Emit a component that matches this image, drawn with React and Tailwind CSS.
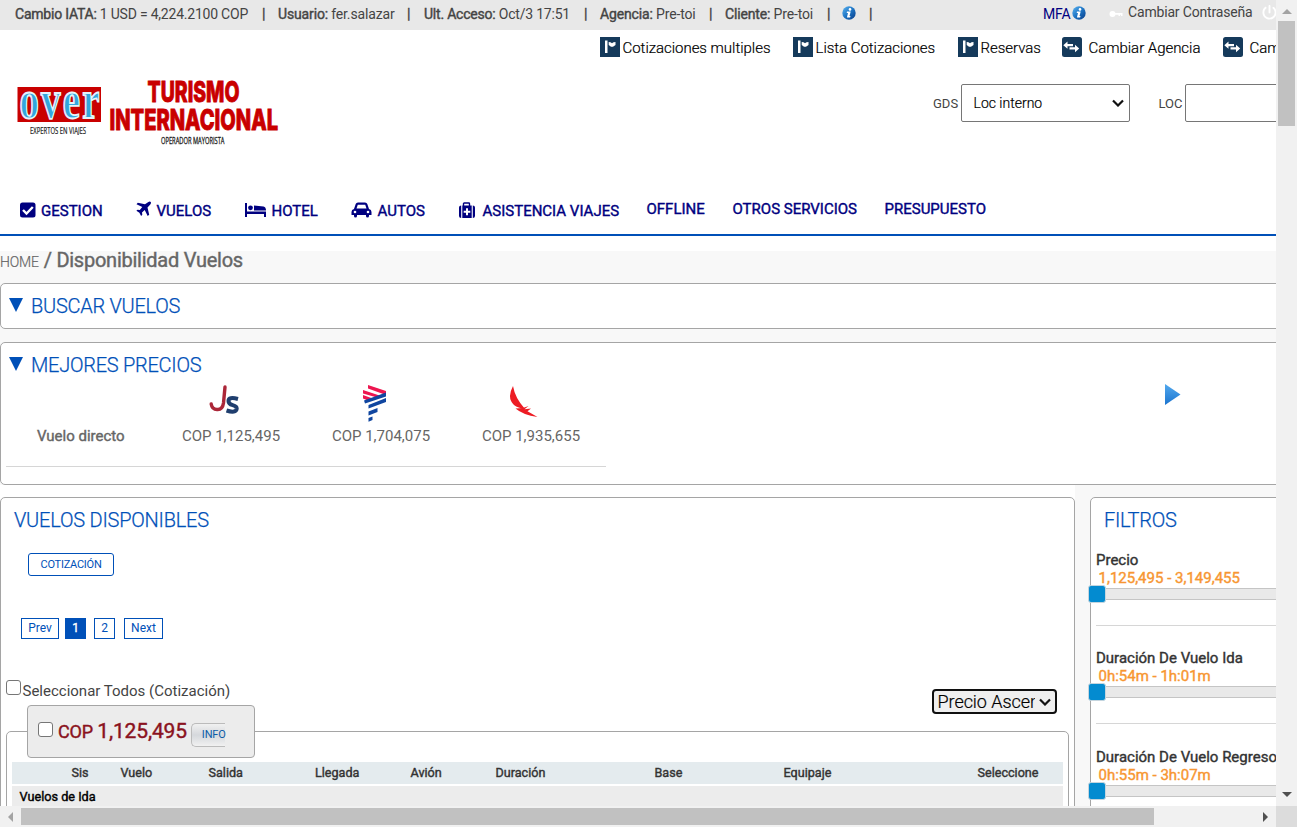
import React from "react";
import { FaPowerOff } from "react-icons/fa6";

const Cell = ({ w, className = "", children }) => (
  <div className={"shrink-0 whitespace-nowrap " + className} style={{ width: w }}>{children}</div>
);

const InfoIcon = () => (
  <svg width="14" height="14" viewBox="0 0 14 14">
    <defs>
      <linearGradient id="info" x1="0" y1="0" x2="1" y2="1">
        <stop offset="0" stopColor="#5cb4f0" />
        <stop offset="0.5" stopColor="#1d74c4" />
        <stop offset="1" stopColor="#0a3c86" />
      </linearGradient>
    </defs>
    <circle cx="7" cy="7" r="6.7" fill="url(#info)" />
    <circle cx="8" cy="3.4" r="1.300" fill="#fff" />
    <path d="M5 5.500h3.700L7.500 10h1l-.4 1.500H4.900L6 7H4.700z" fill="#fff" />
  </svg>
);

const FlagIcon = () => (
  <svg width="20" height="20" viewBox="0 0 20 20" className="shrink-0">
    <rect width="20" height="20" fill="#153a5b" />
    <path d="M5 3.500h2.500V16H5z" fill="#fff" />
    <path d="M8.700 5l1.800.200 1.500 1L13.500 5.200 15.500 5v3L13 9.700h-2L8.700 8z" fill="#fff" />
  </svg>
);

const SwapIcon = () => (
  <svg width="20" height="20" viewBox="0 0 20 20" className="shrink-0">
    <rect width="20" height="20" rx="2.500" fill="#153a5b" />
    <path d="M1.300 8.200L5.500 4.500V7H11v2.300H5.500v2.500zM17.200 11.500L13 7.800v2.500H7.500v2.300H13v2.600z" fill="#fff" />
  </svg>
);

const CheckSquare = () => (
  <svg width="16" height="16" viewBox="0 0 16 16">
    <rect x="0" y=".5" width="15.500" height="15" rx="2.500" fill="#000080" />
    <path d="M3 8l3.500 3.500L12.800 5" fill="none" stroke="#fff" strokeWidth="2.400" />
  </svg>
);

const Plane = () => (
  <svg width="16" height="16" viewBox="0 0 16 16">
    <path d="M14.800.9q.700.900-.5 2.500l-2.800 3 1.700 7.300-1.500 1.300-3-6-2.700 2.500.3 2.300-1.200 1.100-1.700-3.200L.4 9.800l1.100-1.100 2.300.2L6.300 6.100.500 3.200l1.300-1.500 7.200 1.500L12 1.200Q13.800 0 14.800.9z" fill="#000080" />
  </svg>
);

const Bed = () => (
  <svg width="21" height="14" viewBox="0 0 21 14">
    <path d="M0 0h2v8.500h19V14h-2v-3H2v3H0z" fill="#000080" />
    <circle cx="5.500" cy="4.800" r="2.400" fill="#000080" />
    <path d="M9 2.500l9.500 1q2.500.5 2.500 4H9z" fill="#000080" />
  </svg>
);

const Car = () => (
  <svg width="21" height="16" viewBox="0 0 21 16">
    <path d="M3 7l1.700-5Q5.200.5 7 .5h7q1.800 0 2.300 1.500L18 7q2.500.5 2.500 3v3H18v1q0 1.500-1.500 1.500T15 14v-1H6v1q0 1.500-1.500 1.500T3 14v-1H.5v-3Q.500 7.500 3 7z" fill="#000080" />
    <path d="M5.500 6.500l1.300-3.700h7.400l1.300 3.700z" fill="#fff" />
    <circle cx="4" cy="10" r="1.300" fill="#fff" />
    <circle cx="17" cy="10" r="1.300" fill="#fff" />
  </svg>
);

const Kit = () => (
  <svg width="17" height="16" viewBox="0 0 17 16" className="shrink-0">
    <path d="M5.500 4V1.700q0-.7.700-.7h4.600q.7 0 .7.700V4" fill="none" stroke="#000080" strokeWidth="1.400" />
    <path d="M4.300 3.500h9.400V16H4.300zM3.200 3.500Q1 3.500 1 5.500V14q0 2 2.200 2zM14.800 3.500q2.200 0 2.200 2V14q0 2-2.200 2z" fill="#000080" />
    <path d="M8 6.300h2v2.500h2.300v2H10v2.500H8v-2.500H5.700v-2H8z" fill="#fff" />
  </svg>
);

const Chevron = () => (
  <svg width="12" height="8" viewBox="0 0 12 8" className="shrink-0">
    <path d="M1 1.500l5 5 5-5" fill="none" stroke="#111" strokeWidth="2.200" />
  </svg>
);

const Check = ({ className = "" }) => (
  <span className={"block size-[15px] shrink-0 rounded-[3px] border border-[#767676] bg-white " + className} />
);

const B = ({ children }) => <b className="font-normal [-webkit-text-stroke:0.4px_currentColor]">{children}</b>;

function TopBar() {
  return (
    <div className="flex h-[30px] items-center bg-[#e8e8e8] pb-[2px] pl-[15px] text-[14px] tracking-[-0.15px] text-[#444]">
      <Cell w={247} className="tracking-[-0.22px]"><B>Cambio IATA:</B> 1 USD = 4,224.2100 COP</Cell>
      <Cell w={16}><B>|</B></Cell>
      <Cell w={129}><B>Usuario:</B> fer.salazar</Cell>
      <Cell w={17}><B>|</B></Cell>
      <Cell w={160} className="tracking-[-0.21px]"><B>Ult. Acceso:</B> Oct/3 17:51</Cell>
      <Cell w={16}><B>|</B></Cell>
      <Cell w={109}><B>Agencia:</B> Pre-toi</Cell>
      <Cell w={16}><B>|</B></Cell>
      <Cell w={102}><B>Cliente:</B> Pre-toi</Cell>
      <Cell w={15}><B>|</B></Cell>
      <Cell w={27} className="pb-[2px]"><InfoIcon /></Cell>
      <Cell w={174}><B>|</B></Cell>
      <Cell w={29} className="text-[#000080]">MFA</Cell>
      <Cell w={37} className="pb-[2px]"><InfoIcon /></Cell>
      <Cell w={19} className="text-white">
        <svg width="14" height="8" viewBox="0 0 14 8"><circle cx="3.500" cy="4" r="3" fill="#fff" /><path d="M5 3h8.500v3H12V4.800h-1V6H9.500V4.800H5z" fill="#fff" /></svg>
      </Cell>
      <Cell w={134} className="pb-[3px] tracking-[-0.17px]">Cambiar Contraseña</Cell>
      <Cell w={16} className="pb-[3px] text-white"><FaPowerOff size={15} /></Cell>
    </div>
  );
}

function QuickLinks() {
  const items = [
    [FlagIcon, "Cotizaciones multiples", 193, "ml-[2.500px]"],
    [FlagIcon, "Lista Cotizaciones", 165, "ml-[2.500px]"],
    [FlagIcon, "Reservas", 104, "ml-[2.500px]"],
    [SwapIcon, "Cambiar Agencia", 161, "ml-[6.500px]"],
    [SwapIcon, "Cambiar Cliente", 160, "ml-[6.500px]"],
  ];
  return (
    <div className="flex h-[34px] items-center pl-[600px] text-[15px] font-light tracking-[-0.03px] text-black [-webkit-text-stroke:0.2px_currentColor]">
      {items.map(([Icon, label, w, gap]) => (
        <Cell key={label} w={w} className="flex items-center"><Icon /><span className={"pt-[2px] " + gap}>{label}</span></Cell>
      ))}
    </div>
  );
}

function Header() {
  return (
    <div className="flex h-[116px] items-start">
      <svg width="290" height="90" viewBox="0 0 290 90" className="mt-[6px] shrink-0">
        <rect x="17.500" y="17" width="83.500" height="35" fill="#c90000" />
        <text transform="translate(19.500 47.600) scale(1 1.430)" textLength="80" fontFamily="Liberation Serif, serif" fontWeight="700" fontSize="39" fill="#32a6dc" stroke="#e4f4fb" strokeWidth="1.300">over</text>
        <text x="30" y="63.500" textLength="56" lengthAdjust="spacingAndGlyphs" fontFamily="Open Sans, sans-serif" fontSize="8.500" fill="#222" stroke="#222" strokeWidth=".2">EXPERTOS EN VIAJES</text>
        <text x="147.500" y="32" textLength="92" lengthAdjust="spacingAndGlyphs" fontFamily="Inter, sans-serif" fontWeight="800" fontSize="28.500" fill="#c90000" stroke="#c90000" strokeWidth=".9">TURISMO</text>
        <text x="109.500" y="59.700" textLength="168.500" lengthAdjust="spacingAndGlyphs" fontFamily="Inter, sans-serif" fontWeight="800" fontSize="28.500" fill="#c90000" stroke="#c90000" strokeWidth=".9">INTERNACIONAL</text>
        <text x="161" y="73.500" textLength="63.500" lengthAdjust="spacingAndGlyphs" fontFamily="Open Sans, sans-serif" fontSize="8.500" fill="#222" stroke="#222" strokeWidth=".3">OPERADOR MAYORISTA</text>
      </svg>
      <div className="ml-[643px] mt-[20px] flex h-[38px] items-center text-[13px] text-[#444]">
        <Cell w={28} className="pt-px">GDS</Cell>
        <div className="flex h-[38px] w-[169px] items-center justify-between rounded-[2px] border border-[#767676] pl-[11.500px] pr-[5px] text-[14px] font-light text-black [-webkit-text-stroke:0.2px_currentColor]">Loc interno<Chevron /></div>
        <Cell w={27} className="ml-[28.500px] -mr-[0.500px] pt-px">LOC</Cell>
        <div className="h-[38px] w-[160px] shrink-0 rounded-[2px] border border-[#767676]" />
      </div>
    </div>
  );
}

function Nav() {
  const items = [
    [<CheckSquare />, "GESTION", 116, 21, "pb-[3px]"],
    [<Plane />, "VUELOS", 109, 20.5, "pb-[4px]"],
    [<Bed />, "HOTEL", 106, 26.5, "pb-[2px]"],
    [<Car />, "AUTOS", 107, 26.5, "pb-[2px]"],
    [<Kit />, "ASISTENCIA VIAJES", 188.5, 24.5, "pb-[3px]"],
  ];
  return (
    <div className="flex h-[56px] items-center border-b-2 border-[#0050b8] pl-[20px] text-[15px] text-[#000080]">
      {items.map(([icon, label, w, iw, pad]) => (
        <Cell key={label} w={w} className="flex h-full items-center pt-[8px]">
          <span className={"shrink-0 " + pad} style={{ width: iw }}>{icon}</span><B>{label}</B>
        </Cell>
      ))}
      <Cell w={86} className="pt-[4px]"><B>OFFLINE</B></Cell>
      <Cell w={152} className="pt-[4px]"><B>OTROS SERVICIOS</B></Cell>
      <Cell w={120} className="pt-[4px]"><B>PRESUPUESTO</B></Cell>
    </div>
  );
}

const Title = ({ children }) => (
  <div className="flex h-[44px] items-center pl-[8px] text-[20px] font-light tracking-[-0.26px] text-[#0050b8] [-webkit-text-stroke:0.25px_currentColor]">
    <svg width="14" height="14" viewBox="0 0 14 14" className="mb-[2px] mr-[8px]"><path d="M0 0h14L7 14z" fill="#0050b8" /></svg>
    <span>{children}</span>
  </div>
);

const JsLogo = () => (
  <svg width="32" height="38" viewBox="0 0 32 38">
    <path d="M18 4L16.500 20q-1 7-6.500 6.500Q5 26.500 4.200 21" fill="none" stroke="#ab2638" strokeWidth="3.400" strokeLinecap="round" />
    <path d="M31 16Q21.500 13.500 21.500 18q0 3 4.200 4.200t4 3.500Q29 30.500 19.500 27.500" fill="none" stroke="#1f3e6e" strokeWidth="4" />
  </svg>
);
const LatamLogo = () => (
  <svg width="32" height="40" viewBox="0 0 32 40">
    <path d="M11 2l18 6v4L11 5.500zM6 7l18 6-4 1.500L6 10.500zM6 12l11 4-5 2-6-2.500z" fill="#ed1650" />
    <path d="M7 17.500l22-8v4L8 20.500zM11.500 22l17.500-7v4l-17.500 6.500zM11.500 28.500l9-3.500v4l-9 3.500zM11.500 35l4-1.500V37l-4 1.800z" fill="#1046a0" />
  </svg>
);
const AviancaLogo = () => (
  <svg width="36" height="38" viewBox="0 0 36 38">
    <path d="M6 3Q-.5 15 7 22q4 3 11 4Q8 15 6 3z" fill="#ed1c24" />
    <path d="M8.500 25.500q8 0 13-2.500l-4 3.200 6.500-.7-3.500 2.700 10 5.800Q16 32 8.500 25.500z" fill="#ed1c24" />
  </svg>
);

function BestPrices() {
  const prices = [[<JsLogo />, "COP 1,125,495"], [<LatamLogo />, "COP 1,704,075"], [<AviancaLogo />, "COP 1,935,655"]];
  return (
    <section className="h-[143px] w-[1300px] rounded-[5px] border border-[#a5a5a5] bg-white">
      <Title>MEJORES PRECIOS</Title>
      <div className="-mt-[4px] flex items-start">
        <div className="ml-[5px] flex h-[84px] w-[600px] shrink-0 border-b border-[#d6d6d6] text-[15px] text-[#666]">
          <Cell w={150} className="pl-[31px] pt-[42px]"><B>Vuelo directo</B></Cell>
          {prices.map(([logo, price]) => (
            <Cell key={price} w={150} className="text-center">
              <div className="ml-[51px] h-[42px]">{logo}</div>
              <div>{price}</div>
            </Cell>
          ))}
        </div>
        <svg width="17" height="22" viewBox="0 0 17 22" className="ml-[558px] mt-px shrink-0">
          <defs><linearGradient id="next" x1="0" y1="0" x2="0" y2="1"><stop offset="0" stopColor="#52a9ee" /><stop offset="1" stopColor="#1c74cf" /></linearGradient></defs>
          <path d="M1 0l15.500 10.500L1 21z" fill="url(#next)" />
        </svg>
      </div>
    </section>
  );
}

function Flights() {
  const page = "flex h-[21px] items-center justify-center border border-[#0050b8] pb-px text-[12px] ";
  return (
    <section className="h-[400px] w-[1075px] shrink-0 rounded-[5px] border border-[#a5a5a5] bg-white px-[5px]">
      <h2 className="h-[55px] pl-[8px] pt-[7px] text-[20px] font-light leading-[30px] tracking-[-0.22px] text-[#0050b8] [-webkit-text-stroke:0.25px_currentColor]">VUELOS DISPONIBLES</h2>
      <div className="ml-[22px] flex h-[23px] w-[86px] items-center justify-center rounded-[3px] border border-[#0050b8] pt-px text-[11px] tracking-[-0.25px] text-[#0050b8]">COTIZACIÓN</div>
      <div className="ml-[15px] mt-[42px] flex text-[#0050b8]">
        <div className={page + "w-[38px]"}>Prev</div>
        <div className={page + "ml-[6px] w-[21px] bg-[#0050b8] text-white"}><B>1</B></div>
        <div className={page + "ml-[8px] w-[21px]"}>2</div>
        <div className={page + "ml-[9px] w-[39px]"}>Next</div>
      </div>
      <div className="mt-[40px] flex h-[26px] items-start">
        <Check className="mt-[1px]" />
        <span className="ml-[1.500px] mt-[1px] text-[15px] leading-[22px] text-[#444]">Seleccionar Todos (Cotización)</span>
        <div className="ml-auto mr-[12px] mt-[10px] flex h-[25px] w-[125px] shrink-0 items-center rounded-[4px] border-2 border-[#101010] bg-[#efefef] pl-[3.500px] pr-[4px] text-[18px] font-light tracking-[-0.05px] text-black [-webkit-text-stroke:0.2px_currentColor]">
          <span className="mr-[4.500px] w-[97px] shrink-0 overflow-hidden whitespace-nowrap">Precio Ascendente</span><Chevron />
        </div>
      </div>
      <fieldset className="h-[140px] rounded-[5px] border border-[#a5a5a5] px-[5px]">
        <legend className="ml-[15px] flex h-[53px] w-[228px] items-center rounded-[4px] border border-[#a5a5a5] bg-[#ececec] pl-[10px] text-[#8a1220]">
          <Check className="mb-[5px] mr-[5px]" />
          <span className="whitespace-nowrap text-[18px] leading-none tracking-[-0.15px]"><B>COP <span className="text-[21px]">1,125,495</span></B></span>
          <span className="ml-[4px] mt-[6px] flex h-[24px] w-[34px] items-center rounded-l-[5px] border border-r-0 border-[#bbb] bg-linear-to-b from-[#f1f1f1] via-[#d5d8dc] to-[#f1f1f1] pl-[10px] pt-px text-[11px] tracking-[-0.2px] text-[#0b5ca8]">INFO</span>
        </legend>
        <div className="mt-[4px] flex h-[22px] items-center bg-[#e4ebee] pl-[59.500px] text-[12.600px] text-[#333]">
          <Cell w={49}><B>Sis</B></Cell><Cell w={88}><B>Vuelo</B></Cell><Cell w={106.5}><B>Salida</B></Cell>
          <Cell w={95.5}><B>Llegada</B></Cell><Cell w={85}><B>Avión</B></Cell><Cell w={159}><B>Duración</B></Cell>
          <Cell w={129}><B>Base</B></Cell><Cell w={194}><B>Equipaje</B></Cell><Cell w={70}><B>Seleccione</B></Cell>
        </div>
        <div className="mt-[2px] flex h-[22px] items-center bg-[#ececec] pl-[7.500px] text-[12.700px] text-black"><B>Vuelos de Ida</B></div>
      </fieldset>
    </section>
  );
}

function Filters() {
  const filters = [
    ["Precio", "1,125,495 - 3,149,455", "h-[98px]"],
    ["Duración De Vuelo Ida", "0h:54m - 1h:01m", "h-[99px]"],
    ["Duración De Vuelo Regreso", "0h:55m - 3h:07m", "h-[98px]"],
  ];
  return (
    <aside className="ml-[15px] h-[400px] w-[230px] shrink-0 rounded-[5px] border border-[#a5a5a5] bg-white pl-[5px]">
      <h2 className="h-[53px] pl-[8px] pt-[7px] text-[20px] font-light leading-[30px] tracking-[-0.28px] text-[#0050b8] [-webkit-text-stroke:0.25px_currentColor]">FILTROS</h2>
      {filters.map(([name, range, h]) => (
        <div key={name} className={h}>
          <div className="h-[18px] whitespace-nowrap text-[15px] leading-[18px] text-[#333]"><B>{name}</B></div>
          <div className="h-[19px] pl-[2.500px] text-[15px] leading-[18px] text-[#f79631]"><B>{range}</B></div>
          <div className="flex h-[12px] items-center border-y border-[#c5c5c5] bg-[#e9e9e9]">
            <span className="-ml-[8px] block size-[18px] shrink-0 rounded-[3px] border border-[#c5d5de] bg-[#038bd0]" />
          </div>
          <div className="mt-[25px] h-px bg-[#d6d6d6]" />
        </div>
      ))}
    </aside>
  );
}

export default function App() {
  return (
    <div className="flex h-[827px] w-[1297px] flex-col overflow-hidden bg-white font-['Roboto',sans-serif]">
      <div className="flex h-[806px]">
        <main className="h-[806px] w-[1276px] overflow-hidden">
          <TopBar />
          <QuickLinks />
          <Header />
          <Nav />
          <div className="mt-[15px] h-[234px] bg-[#f8f8f8]">
            <div className="flex h-[32px] items-baseline gap-[5px] text-[#666]">
              <span className="text-[14px] font-light leading-[14px] tracking-[-0.2px] [-webkit-text-stroke:0.2px_currentColor]">HOME</span>
              <span className="text-[20px] leading-[18px] tracking-[-0.25px]"><B>/ Disponibilidad Vuelos</B></span>
            </div>
            <section className="mb-[13px] h-[46px] w-[1300px] rounded-[5px] border border-[#a5a5a5] bg-white"><Title>BUSCAR VUELOS</Title></section>
            <BestPrices />
          </div>
          <div className="flex w-[1320px]">
            <div className="w-[1075px] shrink-0 bg-white pt-[12px]"><Flights /></div>
            <div className="h-[330px] w-[245px] shrink-0 bg-[#f8f8f8] pt-[12px]"><Filters /></div>
          </div>
        </main>
        <div className="flex h-[806px] w-[21px] flex-col items-center bg-[#f1f1f1]">
          <svg width="10" height="21" viewBox="0 0 10 21" className="shrink-0"><path d="M0 14l5-5 5 5z" fill="#a3a3a3" /></svg>
          <div className="h-[105px] w-[17px] bg-[#c1c1c1]" />
          <svg width="10" height="21" viewBox="0 0 10 21" className="mt-auto shrink-0"><path d="M0 7l5 5 5-5z" fill="#505050" /></svg>
        </div>
      </div>
      <div className="flex h-[21px] items-center bg-[#f1f1f1]">
        <svg width="21" height="10" viewBox="0 0 21 10"><path d="M13 0L8 5l5 5z" fill="#a3a3a3" /></svg>
        <div className="h-[17px] w-[1133px] bg-[#c1c1c1]" />
        <svg width="21" height="10" viewBox="0 0 21 10" className="ml-auto"><path d="M8 0l5 5-5 5z" fill="#505050" /></svg>
        <div className="size-[21px] bg-[#dcdcdc]" />
      </div>
    </div>
  );
}
